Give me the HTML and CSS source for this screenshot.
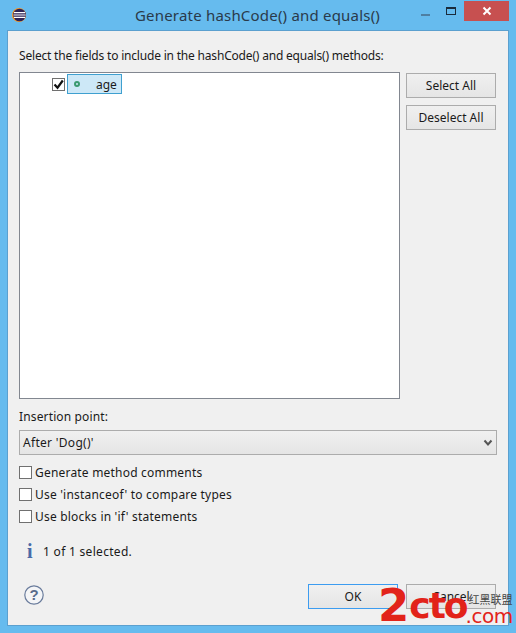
FILE: index.html
```html
<!DOCTYPE html>
<html lang="en">
<head>
    <meta charset="UTF-8">
    <title>Generate hashCode() and equals()</title>
    <link rel="stylesheet" href="styles.css">
</head>
<body>
    <div class="window">
        <!-- Title bar -->
        <div class="title-bar">
            <svg class="app-icon" width="14" height="14" viewBox="0 0 14 14">
                <circle cx="7" cy="7" r="7" fill="#f7941e"/>
                <circle cx="7.5" cy="7" r="6.3" fill="#2c2255"/>
                <path d="M2 4.6h11M1.6 7h12M2 9.4h11" stroke="#fff" stroke-width="1.2"/>
            </svg>
            <div class="title-text">Generate hashCode() and equals()</div>
            <div class="win-controls">
                <div class="win-btn"><span class="min-icon"></span></div>
                <div class="win-btn"><span class="max-icon"></span></div>
                <div class="win-btn close-btn">
                    <svg width="10" height="10" viewBox="0 0 10 10"><path d="M1.5 1.5l7 7M8.5 1.5l-7 7" stroke="#fff" stroke-width="2"/></svg>
                </div>
            </div>
        </div>

        <!-- Dialog -->
        <div class="client">
            <div class="prompt">Select the fields to include in the hashCode() and equals() methods:</div>

            <div class="fields-row">
                <div class="tree">
                    <div class="tree-item">
                        <span class="check checked">
                            <svg width="11" height="11" viewBox="0 0 11 11"><path d="M1.5 5.5l3 3.2L9.8 1.5" fill="none" stroke="#111" stroke-width="2.2"/></svg>
                        </span>
                        <span class="tree-label">
                            <span class="field-dot"></span>
                            <span>age</span>
                        </span>
                    </div>
                </div>
                <div class="side-buttons">
                    <button class="btn">Select All</button>
                    <button class="btn">Deselect All</button>
                </div>
            </div>

            <div class="insert-label">Insertion point:</div>
            <div class="combo">
                <span>After 'Dog()'</span>
                <svg width="10" height="8" viewBox="0 0 10 8"><path d="M1.5 1.5L5 5.5l3.5-4" fill="none" stroke="#555" stroke-width="2"/></svg>
            </div>

            <div class="options">
                <label class="option"><span class="check"></span>Generate method comments</label>
                <label class="option"><span class="check"></span>Use 'instanceof' to compare types</label>
                <label class="option"><span class="check"></span>Use blocks in 'if' statements</label>
            </div>

            <div class="status">
                <span class="info-icon">i</span>
                <span>1 of 1 selected.</span>
            </div>

            <div class="footer">
                <svg class="help-icon" width="20" height="20" viewBox="0 0 20 20">
                    <circle cx="10" cy="10" r="9.2" fill="#f4f5f7" stroke="#6a7c9c" stroke-width="1.2"/>
                    <text x="10" y="15" text-anchor="middle" class="help-mark">?</text>
                </svg>
                <div class="footer-buttons">
                    <button class="btn btn-default">OK</button>
                    <button class="btn">Cancel</button>
                </div>
            </div>
        </div>

        <!-- Site watermark -->
        <div class="watermark">
            <span class="wm-two">2</span><span class="wm-cto">cto</span>
            <span class="wm-side">
                <span class="wm-cn">红黑联盟</span>
                <span class="wm-com">.com</span>
            </span>
        </div>
    </div>
</body>
</html>
```

FILE: styles.css
```css
* {
    box-sizing: border-box;
}

body {
    margin: 0;
    font-family: "Noto Sans", sans-serif;
    font-size: 12px;
    color: #1a1a1a;
}

.window {
    position: relative;
    width: 516px;
    height: 633px;
    background: #66bbee;
    padding: 0 8px 8px;
    display: flex;
    flex-direction: column;
    overflow: hidden;
}

.title-bar {
    height: 31px;
    display: flex;
    align-items: center;
    position: relative;
}

.app-icon {
    margin: 0 0 1px 4px;
}

.title-text {
    flex: 1;
    text-align: center;
    font-size: 15px;
    letter-spacing: 0.2px;
    color: #2a3a4a;
    margin-right: 19px;
    margin-bottom: 1px;
}

.win-controls {
    position: absolute;
    top: 1px;
    right: -1px;
    display: flex;
    height: 20px;
}

.win-btn {
    width: 26px;
    display: flex;
    align-items: center;
    justify-content: center;
}

.close-btn {
    width: 45px;
    background: #c75050;
}

.min-icon {
    width: 9px;
    height: 2px;
    margin-top: 7px;
    background: #4e7fa2;
}

.max-icon {
    width: 10px;
    height: 8px;
    border: 1px solid #1a2b3b;
    border-top-width: 2px;
}

.client {
    flex: 1;
    background: #f0f0f0;
    box-shadow: 0 0 0 1px #5ba0cf;
    padding: 16px 11px 16px;
    display: flex;
    flex-direction: column;
}

.prompt {
    height: 17px;
    line-height: 17px;
    white-space: nowrap;
    letter-spacing: -0.19px;
}

.fields-row {
    display: flex;
    gap: 6px;
    margin-top: 8px;
}

.tree {
    width: 381px;
    height: 327px;
    background: white;
    border: 1px solid #828790;
    padding: 1px 0 0 32px;
}

.tree-item {
    display: flex;
    align-items: center;
    height: 20px;
    gap: 2px;
}

.check {
    width: 13px;
    height: 13px;
    background: white;
    border: 1px solid #707070;
    display: flex;
    align-items: center;
    justify-content: center;
    flex-shrink: 0;
}

.tree-label {
    display: flex;
    align-items: center;
    width: 55px;
    height: 20px;
    background: #cde8f7;
    border: 1px solid #3fa0d0;
    padding-left: 6px;
    gap: 16px;
}

.field-dot {
    width: 6px;
    height: 6px;
    border: 2px solid #3a9a70;
    border-radius: 50%;
}

.side-buttons {
    display: flex;
    flex-direction: column;
    gap: 7px;
    margin-top: 1px;
}

.btn {
    width: 90px;
    height: 25px;
    padding: 0;
    font-family: inherit;
    font-size: 12px;
    color: #1a1a1a;
    background: linear-gradient(#f0f0f0, #e5e5e5);
    border: 1px solid #acacac;
}

.btn-default {
    border-color: #3c9cf0;
}

.insert-label {
    margin-top: 9px;
    height: 17px;
    line-height: 17px;
    letter-spacing: 0.14px;
}

.combo {
    width: 478px;
    height: 25px;
    margin-top: 5px;
    padding: 0 3px;
    display: flex;
    align-items: center;
    justify-content: space-between;
    background: linear-gradient(#f0f0f0, #e5e5e5);
    border: 1px solid #acacac;
    letter-spacing: 0.3px;
}

.options {
    display: flex;
    flex-direction: column;
    gap: 5px;
    margin-top: 9px;
    letter-spacing: 0.2px;
}

.option {
    display: flex;
    align-items: center;
    gap: 3px;
    height: 17px;
}

.status {
    display: flex;
    align-items: center;
    gap: 11px;
    height: 17px;
    margin-top: 18px;
    padding-left: 8px;
    letter-spacing: 0.3px;
}

.info-icon {
    width: 5px;
    font-family: "Liberation Serif", serif;
    font-size: 20px;
    font-weight: bold;
    color: #4a6aa8;
}

.footer {
    display: flex;
    align-items: center;
    justify-content: space-between;
    margin-top: 24px;
    padding-left: 5px;
}

.help-icon {
    margin-bottom: 3px;
}

.help-mark {
    font-family: "Liberation Sans", sans-serif;
    font-size: 15px;
    font-weight: bold;
    fill: #5a6c8c;
}

.footer-buttons {
    display: flex;
    gap: 8px;
    margin-right: 1px;
}

.watermark {
    position: absolute;
    left: 378px;
    top: 585px;
    display: flex;
    align-items: flex-end;
    color: #e2231a;
    font-family: "DejaVu Sans", sans-serif;
    line-height: 1;
}

.wm-two {
    font-size: 45px;
    font-weight: bold;
    line-height: 41px;
}

.wm-cto {
    font-size: 36px;
    font-weight: bold;
    letter-spacing: -2px;
    line-height: 41px;
}

.wm-side {
    display: flex;
    flex-direction: column;
    margin-left: -1px;
}

.wm-cn {
    font-family: "Noto Sans CJK SC", sans-serif;
    font-size: 11px;
    color: #444;
    margin-left: 3px;
}

.wm-com {
    font-size: 20px;
    letter-spacing: -0.5px;
    margin-top: 1px;
}
```
